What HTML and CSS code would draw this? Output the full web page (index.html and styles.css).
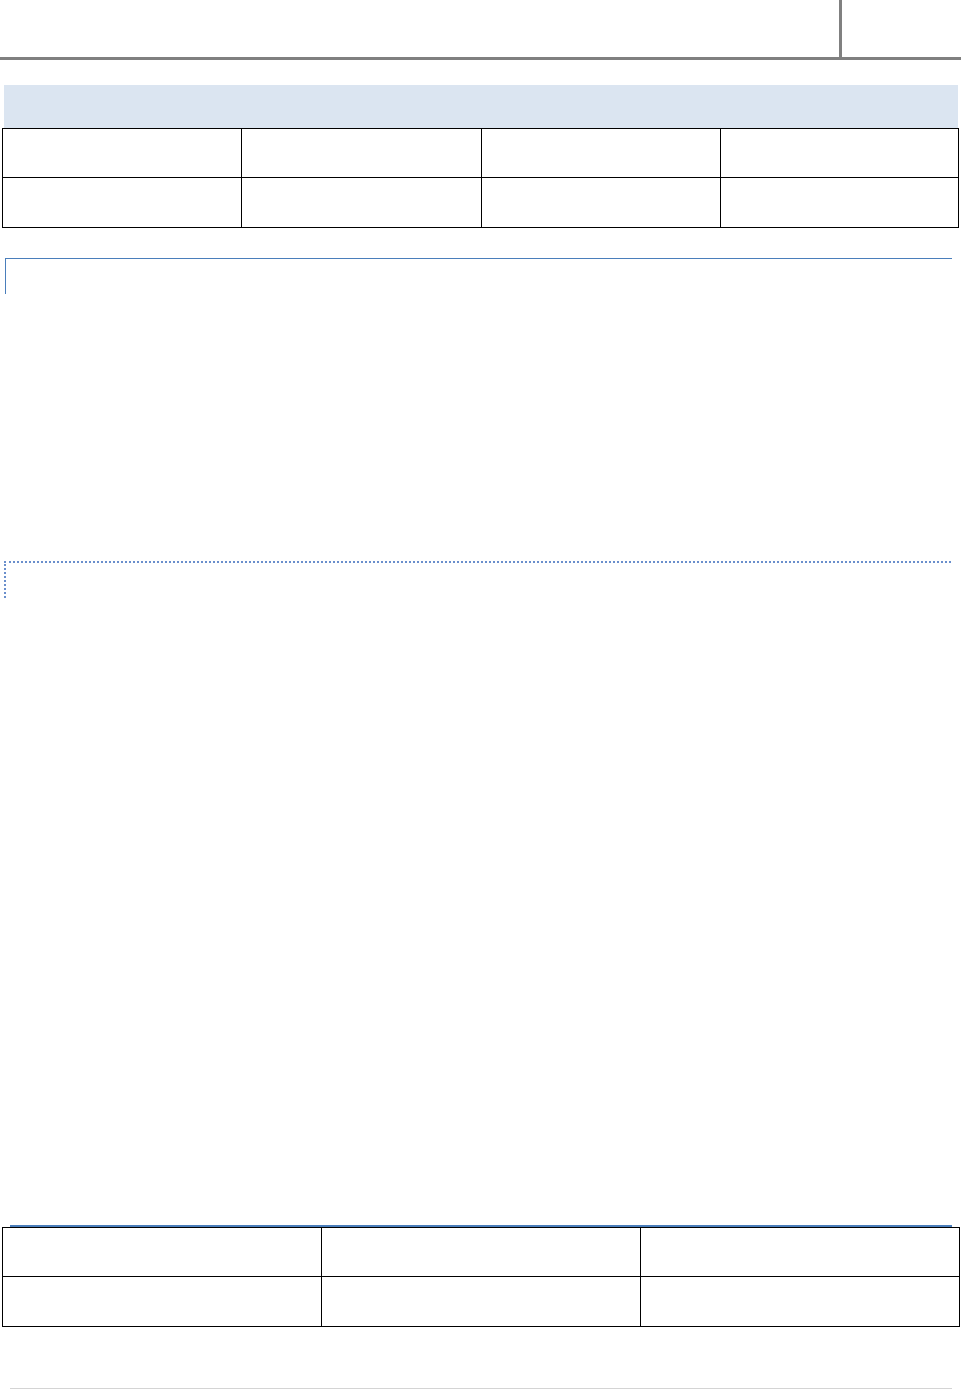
FILE: index.html
```html
<!DOCTYPE html>
<html>
<head>
<meta charset="utf-8">
<link rel="stylesheet" href="styles.css">
</head>
<body>
<div class="page">
  <header class="header">
    <div class="header-main"></div>
    <div class="header-side"></div>
  </header>

  <div class="band"></div>

  <div class="grid grid-4">
    <div class="cell r1"></div><div class="cell r1"></div><div class="cell r1"></div><div class="cell r1"></div>
    <div class="cell r2"></div><div class="cell r2"></div><div class="cell r2"></div><div class="cell r2"></div>
  </div>

  <div class="frame frame-solid"></div>

  <div class="frame frame-dotted"></div>

  <div class="rule-blue"></div>

  <div class="grid grid-3">
    <div class="cell r1"></div><div class="cell r1"></div><div class="cell r1"></div>
    <div class="cell r2"></div><div class="cell r2"></div><div class="cell r2"></div>
  </div>

  <div class="footer-rule"></div>
</div>
</body>
</html>
```

FILE: styles.css
```css
* { box-sizing: content-box; }
html, body {
  margin: 0;
  padding: 0;
  background: #ffffff;
  font-family: "Liberation Sans", Arial, sans-serif;
}
.page {
  width: 961px;
  height: 1389px;
  overflow: hidden;
  display: flex;
  flex-direction: column;
}
.header {
  display: flex;
  height: 57px;
  border-bottom: 3px solid #808080;
}
.header-main {
  width: 839px;
  border-right: 3px solid #808080;
}
.header-side { flex: 1; }

.band {
  margin: 25px 0 0 4px;
  width: 954px;
  height: 43px;
  background: #dbe5f1;
}

.grid {
  display: grid;
  margin-left: 2px;
  border-top: 1px solid #000;
  border-left: 1px solid #000;
}
.grid-4 {
  width: 956px;
  grid-template-columns: 239px 240px 239px 238px;
}
.grid-3 {
  width: 957px;
  grid-template-columns: 319px 319px 319px;
}
.cell {
  border-right: 1px solid #000;
  border-bottom: 1px solid #000;
}
.r1 { height: 48px; }
.r2 { height: 49px; }

.frame {
  margin-left: 5px;
  width: 946px;
  height: 35px;
}
.frame-solid {
  margin-top: 30px;
  border-top: 1px solid #4a7ebb;
  border-left: 1px solid #4a7ebb;
}
.frame-dotted {
  margin-top: 267px;
  margin-left: 4px;
  width: 945px;
  border-top: 2px dotted #6a8fcc;
  border-left: 2px dotted #6a8fcc;
}
.rule-blue {
  margin: 627px 0 0 10px;
  width: 942px;
  height: 2px;
  background: #4a7ebb;
}
.footer-rule {
  margin: 61px 0 0 10px;
  width: 942px;
  height: 1px;
  background: #d4d4d4;
}
```
